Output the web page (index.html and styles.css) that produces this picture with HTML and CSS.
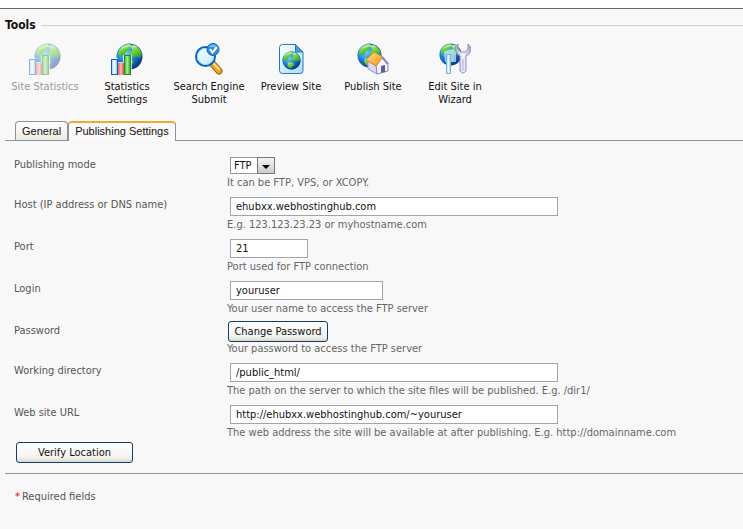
FILE: index.html
```html
<!DOCTYPE html>
<html lang="en">
<head>
<meta charset="utf-8">
<title>Publishing Settings</title>
<link rel="stylesheet" href="styles.css">
</head>
<body>
<svg class="defs" aria-hidden="true">
  <defs>
    <radialGradient id="sea" cx=".35" cy=".35" r=".7"><stop offset="0" stop-color="#7ad4ff"/><stop offset=".5" stop-color="#1f82d8"/><stop offset="1" stop-color="#0a3180"/></radialGradient>
    <linearGradient id="land" x1="0" y1="0" x2=".6" y2="1"><stop offset="0" stop-color="#c4f27c"/><stop offset=".5" stop-color="#72d43c"/><stop offset="1" stop-color="#2a9c3c"/></linearGradient>
    <linearGradient id="blueBar"><stop offset="0" stop-color="#8cd4ff"/><stop offset=".5" stop-color="#fff"/><stop offset="1" stop-color="#70bdf5"/></linearGradient>
    <linearGradient id="redBar"><stop offset="0" stop-color="#d95f60"/><stop offset=".5" stop-color="#ffb8b0"/><stop offset="1" stop-color="#cc4a50"/></linearGradient>
    <linearGradient id="greenBar"><stop offset="0" stop-color="#3aad35"/><stop offset=".45" stop-color="#a4f383"/><stop offset="1" stop-color="#2c9a30"/></linearGradient>
    <linearGradient id="lens" x1="0" y1="0" x2="1" y2="1"><stop offset="0" stop-color="#fff"/><stop offset="1" stop-color="#bfe9ff"/></linearGradient>
    <linearGradient id="paper" x1="0" y1="0" x2="1" y2="1"><stop offset="0" stop-color="#fff"/><stop offset="1" stop-color="#a9dcff"/></linearGradient>
    <linearGradient id="steel"><stop offset="0" stop-color="#a9abd6"/><stop offset=".5" stop-color="#f6f6ff"/><stop offset="1" stop-color="#a3a4ce"/></linearGradient>
    <linearGradient id="roof" x1="0" y1="0" x2="1" y2="1"><stop offset="0" stop-color="#ffdf76"/><stop offset="1" stop-color="#ed9425"/></linearGradient>
    <symbol id="globe" viewBox="0 0 26 26">
      <circle cx="13" cy="13" r="12.500" fill="url(#sea)"/>
      <path d="M3 7C5 3 9 1 13 1l2 2-3 2 1 2-4 2-1 3-3 1-3-2Z" fill="url(#land)"/>
      <path d="M17 2c4 1 7 5 8 9l-2 4-3-2-3 1-4-3 3-4-2-3Z" fill="url(#land)"/>
      <path d="M8 16l5-1 4 3-2 3-4 3c-3-2-4-5-3-8Z" fill="url(#land)"/>
      <path d="M4 7C7 1 16 0 20 5 15 3 9 4 4 7Z" fill="#fff" opacity=".4"/>
    </symbol>
    <symbol id="stats" viewBox="0 0 32 32">
      <use href="#globe" x="5" y="0" width="27" height="27"/>
      <path d="M-1 15h8v4h5v-7h9v21H-1Z" fill="#fff" opacity=".7"/>
      <rect x=".500" y="16.500" width="6" height="15" fill="url(#blueBar)" stroke="#1461b5"/>
      <rect x="7" y="20" width="6" height="12" fill="url(#redBar)"/>
      <rect x="13.500" y="12.500" width="6" height="19" fill="url(#greenBar)" stroke="#238b2a"/>
    </symbol>
  </defs>
</svg>

<main class="page">
  <section class="tools">
    <h2 class="tools-title">Tools</h2>
    <nav class="toolbar" aria-label="Tools">
      <a class="tool disabled" aria-disabled="true">
        <svg class="icon" viewBox="0 0 32 32" aria-hidden="true"><use href="#stats"/></svg>
        <span>Site Statistics</span>
      </a>
      <a class="tool" href="#">
        <svg class="icon" viewBox="0 0 32 32" aria-hidden="true"><use href="#stats"/></svg>
        <span>Statistics Settings</span>
      </a>
      <a class="tool" href="#">
        <svg class="icon" viewBox="0 0 32 32" aria-hidden="true">
          <path d="M19 20l7 8" stroke="#9a5c06" stroke-width="7" stroke-linecap="round"/>
          <path d="M19 20l7 8" stroke="#eba42a" stroke-width="5" stroke-linecap="round"/>
          <path d="M20 20l6 6" stroke="#ffe18a" stroke-width="2" stroke-linecap="round"/>
          <circle cx="12.500" cy="13.500" r="9.500" fill="url(#lens)" stroke="#0b66b4" stroke-width="2"/>
          <circle cx="12.500" cy="13.500" r="8" fill="none" stroke="#8ed8ff"/>
          <circle cx="20" cy="6.500" r="6" fill="#2c8ddd" stroke="#1264ac"/>
          <path d="M16 4c2-4 7-3 8 1-3-1-5-1-8-1Z" fill="#a8dcff" opacity=".6"/>
          <path d="M17 6l2.500 3.500L24 4" fill="none" stroke="#fff" stroke-width="2"/>
        </svg>
        <span>Search Engine Submit</span>
      </a>
      <a class="tool" href="#">
        <svg class="icon" viewBox="0 0 32 32" aria-hidden="true">
          <path d="M7.500 1.500h13L28 9v18.500q0 3-3 3H7.500q-3 0-3-3v-23q0-3 3-3Z" fill="url(#paper)" stroke="#2579bd"/>
          <path d="M20.500 1.500V9H28Z" fill="#4a9ddd" stroke="#2579bd"/>
          <use href="#globe" x="7" y="8" width="19" height="19"/>
        </svg>
        <span>Preview Site</span>
      </a>
      <a class="tool" href="#">
        <svg class="icon" viewBox="0 0 32 32" aria-hidden="true">
          <use href="#globe" x="0" y="0" width="25" height="25"/>
          <path d="M11 18l9 5v8l-9-5Z" fill="#d9d8f0" stroke="#9a99c4"/>
          <path d="M19 22l6-8 6 6v8l-11 3Z" fill="#f3f2ff" stroke="#8887b5"/>
          <path d="M24 23l4-1v7l-4 1Z" fill="#625d88"/>
          <path d="M9 17l8-8 9 5-7 9Z" fill="url(#roof)" stroke="#d08c30"/>
          <path d="M25 14l6 7" stroke="#8b89b5" stroke-width="2"/>
        </svg>
        <span>Publish Site</span>
      </a>
      <a class="tool" href="#">
        <svg class="icon" viewBox="0 0 32 32" aria-hidden="true">
          <use href="#globe" x="0" y="0" width="23" height="23"/>
          <path d="M5 8l9-2 3 3v10H6Z" fill="#bfe9ff" opacity=".7"/>
          <path d="M7.500 11.500h4v19h-4Z" fill="url(#blueBar)" stroke="#7fb0dc"/>
          <path d="M19 1c-4 3-3 9 2 12v15q3 4 6 0V13c6-3 6-9 2-12v5l-3 3h-4l-3-3Z" fill="url(#steel)" stroke="#8f8ec0"/>
          <path d="M24 16v12" stroke="#a6a6d0"/>
        </svg>
        <span>Edit Site in Wizard</span>
      </a>
    </nav>
  </section>

  <nav class="tabs" aria-label="Settings">
    <a class="tab" href="#">General</a>
    <a class="tab active" href="#" aria-current="page">Publishing Settings</a>
  </nav>

  <form>
    <div class="fields">
      <div class="row">
        <label for="mode">Publishing mode</label>
        <div class="field">
          <div class="select">
            <select id="mode"><option>FTP</option><option>VPS</option><option>XCOPY</option></select>
            <svg class="arrow" viewBox="0 0 16 15" aria-hidden="true"><path d="M4 7h8l-4 4Z"/></svg>
          </div>
          <p class="hint">It can be FTP, VPS, or XCOPY.</p>
        </div>
      </div>
      <div class="row">
        <label for="host">Host (IP address or DNS name)</label>
        <div class="field">
          <input class="text wide" id="host" type="text" value="ehubxx.webhostinghub.com">
          <p class="hint">E.g. 123.123.23.23 or myhostname.com</p>
        </div>
      </div>
      <div class="row">
        <label for="port">Port</label>
        <div class="field">
          <input class="text short" id="port" type="text" value="21">
          <p class="hint">Port used for FTP connection</p>
        </div>
      </div>
      <div class="row">
        <label for="login">Login</label>
        <div class="field">
          <input class="text medium" id="login" type="text" value="youruser">
          <p class="hint">Your user name to access the FTP server</p>
        </div>
      </div>
      <div class="row">
        <label for="password">Password</label>
        <div class="field">
          <button class="button change" id="password" type="button">Change Password</button>
          <p class="hint">Your password to access the FTP server</p>
        </div>
      </div>
      <div class="row">
        <label for="directory">Working directory</label>
        <div class="field">
          <input class="text wide" id="directory" type="text" value="/public_html/">
          <p class="hint">The path on the server to which the site files will be published. E.g. /dir1/</p>
        </div>
      </div>
      <div class="row">
        <label for="url">Web site URL</label>
        <div class="field">
          <input class="text wide" id="url" type="text" value="http://ehubxx.webhostinghub.com/~youruser">
          <p class="hint">The web address the site will be available at after publishing. E.g. http://domainname.com</p>
        </div>
      </div>
    </div>
    <button class="button verify" type="button">Verify Location</button>
    <p class="required"><span class="star">*</span>Required fields</p>
  </form>
</main>
</body>
</html>
```
FILE: styles.css
```css
* { box-sizing: border-box; }

body {
  margin: 0;
  padding-top: 8px;
  background: #fff;
  color: #555;
  font: 11px/14px "DejaVu Sans Condensed", Tahoma, "DejaVu Sans", sans-serif;
}

.defs { position: absolute; width: 0; height: 0; }

.page {
  min-height: calc(100vh - 8px);
  padding-left: 5px;
  border-top: 1px solid #666;
  background: #f8f8f8;
}

.tools { padding-top: 8px; }

.tools-title {
  display: flex;
  align-items: center;
  gap: 5px;
  margin: 0;
  color: #111;
  font-size: 12px;
  line-height: 16px;
}

.tools-title::after {
  content: "";
  flex: 1;
  height: 1px;
  background: #d0d0d0;
}

.toolbar { display: flex; height: 88px; margin-left: -1px; padding-top: 10px; }

.tool {
  display: flex;
  flex-direction: column;
  align-items: center;
  gap: 5px;
  width: 82px;
  padding: 0 4px;
  color: #111;
  line-height: 13px;
  text-align: center;
  text-decoration: none;
}

.tool span { margin: 0 -4px; }
.tool.disabled .icon { opacity: .45; }
.tool.disabled { color: #999; }
.icon { width: 32px; height: 32px; flex: none; }

.tabs {
  display: flex;
  height: 20px;
  padding-left: 10px;
  border-bottom: 1px solid #8594a3;
}

.tab {
  height: 19px;
  padding: 2px 6px 0;
  border: 1px solid #8594a3;
  border-bottom: 0;
  border-radius: 4px 4px 0 0;
  background: linear-gradient(#fff, #eaeae2);
  color: #111;
  font: 11px/15px "Liberation Sans", Arial, sans-serif;
  text-decoration: none;
  white-space: nowrap;
}

.tab.active {
  height: 20px;
  padding-top: 1px;
  border-top: 2px solid #f0a92e;
  background: #fafafa;
}

.fields {
  display: grid;
  gap: 7px;
  padding: 16px 9px 2px;
}

.row { display: grid; grid-template-columns: 213px 1fr; }
.row label { padding-top: 1px; }
.hint { margin: 2px 0 0; color: #666; }

.text {
  display: block;
  height: 19px;
  margin-left: 3px;
  padding: 0 5px;
  border: 1px solid #a0a5ab;
  background: #fff;
  color: #111;
  font: inherit;
}

.wide { width: 328px; max-width: 100%; }
.medium { width: 153px; }
.short { width: 78px; }

.select { position: relative; width: 45px; height: 17px; margin-left: 3px; }

.select select {
  display: block;
  width: 100%;
  height: 100%;
  padding: 0 3px;
  border: 1px solid #999;
  border-radius: 0;
  background: #fff;
  color: #111;
  font: inherit;
  appearance: none;
}

.arrow {
  position: absolute;
  top: 0;
  right: 0;
  width: 18px;
  height: 17px;
  border: 1px solid #777;
  background: linear-gradient(#f4f4f4, #ccc);
  pointer-events: none;
}

.button {
  display: block;
  height: 21px;
  padding: 0;
  border: 1px solid #123f69;
  border-radius: 3px;
  background: linear-gradient(#fff, #f4f3ef 75%, #dcd8cc);
  color: #111;
  font: inherit;
}

.change { width: 100px; margin: -2px 1px; }
.verify { width: 117px; margin: 0 11px 10px; }

.required {
  margin: 0;
  padding: 16px 10px;
  border-top: 1px solid #8594a3;
}

.star { margin-right: 2px; color: #e00; }
```
